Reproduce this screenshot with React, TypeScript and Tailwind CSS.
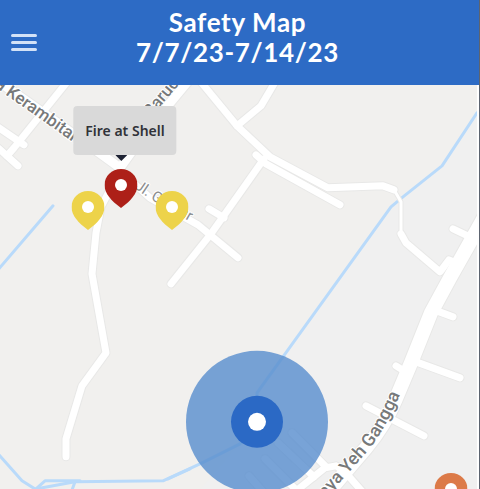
import React from "react";

const MAP_LEFT = 0;
const MAP_TOP = 85;
const MAP_WIDTH = 477;
const MAP_HEIGHT = 404;

type Place = { x: number; y: number };

function at({ x, y }: Place): React.CSSProperties {
  return {
    left: `${((x - MAP_LEFT) / MAP_WIDTH) * 100}%`,
    top: `${((y - MAP_TOP) / MAP_HEIGHT) * 100}%`,
  };
}

const pins = [
  { id: "west", label: "Incident, west", x: 88, y: 229, color: "text-[#edd34a]" },
  { id: "east", label: "Incident, east", x: 172, y: 229, color: "text-[#edd34a]" },
  { id: "shell", label: "Fire at Shell", x: 121, y: 207, color: "text-[#ad2018]" },
  { id: "south", label: "Incident, south", x: 451, y: 510, color: "text-[#dc7a48]" },
];

const wideRoads = [
  "M-8 76 L76 135 L120 167",
  "M120 167 L146 131 L190 78",
];

const roads = [
  "M68 80 L14 147 L7 155",
  "M-4 125 L24 144",
  "M-2 147 L18 165",
  "M120 170 L101 206 L96 232 L92 273 L106 352 L82 385 L66 438 L66 456",
  "M120 170 L150 197 L198 224 L238 257",
  "M264 158 L211 233 L171 283",
  "M209 208 L224 217",
  "M200 80 L237 125 L270 156 L328 187 L383 185 L394 189",
  "M277 78 L261 105 L237 125",
  "M256 154 L266 163 L340 204",
  "M401 233 L406 242 L440 271 L449 259 L456 262",
  "M453 228 L472 237",
  "M434 309 L453 316",
  "M396 365 L404 370",
  "M416 361 L460 377",
  "M366 405 L424 435",
  "M290 495 L325 467 L336 465 L344 470 L366 495",
  "M292 432 L326 466",
  "M278 442 L314 476",
  "M265 458 L296 489",
  "M249 475 L264 492",
];

const mainRoad =
  "M490 206 L450 277 L431 312 L411 362 L395 400 Q385 424 366 447 L325 495";

const rivers = [
  "M477 112 L442 165 L403 196 L391 206 L257 392 L257 421 L240 443 L200 463 L163 480 L75 481 L37 488",
  "M-2 453 L22 480 L38 490",
  "M53 205 L-2 269",
  "M36 488 L45 480 L80 480",
  "M75 481 L71 492",
  "M168 478 L190 468",
];

function MapBackground() {
  return (
    <svg
      viewBox="0 85 477 404"
      className="block h-full w-full"
      role="img"
      aria-label="Street map"
      fill="none"
      strokeLinejoin="round"
      strokeLinecap="round"
    >
      <rect x="0" y="85" width="477" height="404" fill="#f1f0ee" />
      <path
        d="M477 112 L442 165 L391 206 L257 392 L257 421 L200 489 L477 489Z"
        fill="#f0f0f0"
      />
      <g stroke="#b9dafa" strokeWidth="3">
        {rivers.map((d) => (
          <path key={d} d={d} />
        ))}
      </g>
      <g stroke="#e8e8e7">
        {wideRoads.map((d) => (
          <path key={d} d={d} strokeWidth="11" />
        ))}
        {roads.map((d) => (
          <path key={d} d={d} strokeWidth="9" />
        ))}
        <path d="M394 189 L401 201 V233" strokeWidth="5" />
        <path d={mainRoad} strokeWidth="16" />
      </g>
      <g stroke="#ffffff">
        {wideRoads.map((d) => (
          <path key={d} d={d} strokeWidth="9" />
        ))}
        {roads.map((d) => (
          <path key={d} d={d} strokeWidth="7" />
        ))}
        <path d="M394 189 L401 201 V233" strokeWidth="3" />
        <path d={mainRoad} strokeWidth="14" />
      </g>
      <path id="kerambitan" d="M-9 83 L3 92 L84 149" />
      <path id="baruc" d="M151 117 L159 107 L196 64" />
      <path id="gunung" d="M134 187 L150 198 L204 229" />
      <path id="raya" d="M318 506 L368 450 Q388 425 403 386" />
      <g
        fill="#77797a"
        stroke="#ffffff"
        strokeWidth="2"
        paintOrder="stroke"
        className="font-[Roboto,sans-serif] font-medium"
      >
        <text fontSize="17">
          <textPath href="#kerambitan" startOffset="4">
            a Kerambitan
          </textPath>
        </text>
        <text fontSize="17">
          <textPath href="#baruc">Baruc</textPath>
        </text>
        <text fontSize="15" fill="#8b8d8e" fontWeight="400">
          <textPath href="#gunung">Jl. Guntur</textPath>
        </text>
        <text fontSize="18">
          <textPath href="#raya">Raya Yeh Gangga</textPath>
        </text>
      </g>
      <circle cx="257" cy="421" r="71" fill="#5a8fce" fillOpacity="0.82" />
      <circle cx="257" cy="421" r="26" fill="#2b69c5" />
      <circle cx="257" cy="421" r="9" fill="#ffffff" />
    </svg>
  );
}

function PinIcon() {
  return (
    <svg viewBox="0 0 33 39" className="block h-[39px] w-[33px]" aria-hidden="true">
      <path
        d="M16.5 0C7.2 0 0 7 0 16c0 8.6 7 16 16.5 23C26 32 33 24.6 33 16 33 7 25.800 0 16.500 0Z"
        fill="currentColor"
      />
      <circle cx="16.500" cy="16" r="6" fill="#ffffff" />
    </svg>
  );
}

export default function App() {
  return (
    <div className="w-full overflow-hidden border-r border-[#5d6470] bg-[#f1f0ee]">
      <header className="grid grid-cols-[1fr_auto_1fr] items-center bg-[#2d6bc5] pr-1 font-[Lato,sans-serif] text-white">
        <button
          type="button"
          aria-label="Open menu"
          className="ml-[11px] flex w-[26px] flex-col gap-1"
        >
          <span className="h-[3px] rounded-full bg-[#d3e2f7]" />
          <span className="h-[3px] rounded-full bg-[#d3e2f7]" />
          <span className="h-[3px] rounded-full bg-[#d3e2f7]" />
        </button>
        <h1 className="pt-[7px] pb-[18px] text-center text-[26px] leading-[30px] font-bold tracking-wide">
          Safety Map
          <br />
          7/7/23-7/14/23
        </h1>
      </header>
      <main className="relative aspect-[477/404] overflow-hidden border-r-2 border-white">
        <MapBackground />
        {pins.map((pin) => (
          <button
            key={pin.id}
            type="button"
            aria-label={pin.label}
            style={at(pin)}
            className={`absolute -translate-x-1/2 -translate-y-full ${pin.color}`}
          >
            <PinIcon />
          </button>
        ))}
        <div
          role="tooltip"
          style={at({ x: 125, y: 161 })}
          className="absolute flex -translate-x-1/2 -translate-y-full flex-col items-center"
        >
          <span className="rounded bg-[#d9d9d9] px-3 py-[14px] font-['Noto_Sans',sans-serif] text-sm leading-[21px] font-semibold whitespace-nowrap text-[#303238]">
            Fire at Shell
          </span>
          <svg viewBox="0 0 12 6" className="mr-2 h-[6px] w-[12px]" aria-hidden="true">
            <path d="M0 0H12L6 6Z" fill="#1d2233" />
          </svg>
        </div>
      </main>
    </div>
  );
}
